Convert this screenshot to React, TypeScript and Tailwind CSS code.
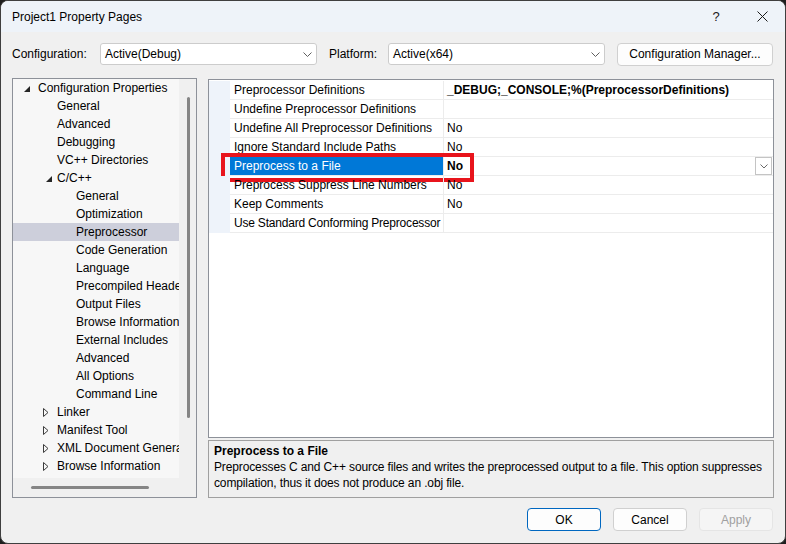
import React from 'react';

type TreeItem = { t: string; l: 0 | 1 | 2; icon?: 'open' | 'closed'; sel?: boolean };

const tree: TreeItem[] = [
  { t: 'Configuration Properties', l: 0, icon: 'open' },
  { t: 'General', l: 1 },
  { t: 'Advanced', l: 1 },
  { t: 'Debugging', l: 1 },
  { t: 'VC++ Directories', l: 1 },
  { t: 'C/C++', l: 1, icon: 'open' },
  { t: 'General', l: 2 },
  { t: 'Optimization', l: 2 },
  { t: 'Preprocessor', l: 2, sel: true },
  { t: 'Code Generation', l: 2 },
  { t: 'Language', l: 2 },
  { t: 'Precompiled Headers', l: 2 },
  { t: 'Output Files', l: 2 },
  { t: 'Browse Information', l: 2 },
  { t: 'External Includes', l: 2 },
  { t: 'Advanced', l: 2 },
  { t: 'All Options', l: 2 },
  { t: 'Command Line', l: 2 },
  { t: 'Linker', l: 1, icon: 'closed' },
  { t: 'Manifest Tool', l: 1, icon: 'closed' },
  { t: 'XML Document Generator', l: 1, icon: 'closed' },
  { t: 'Browse Information', l: 1, icon: 'closed' },
];

const levelPad = ['pl-[6px]', 'pl-[25px]', 'pl-[44px]'];

const rows: { n: string; v: string; bold?: boolean; sel?: boolean; tight?: boolean }[] = [
  { n: 'Preprocessor Definitions', v: '_DEBUG;_CONSOLE;%(PreprocessorDefinitions)', bold: true },
  { n: 'Undefine Preprocessor Definitions', v: '' },
  { n: 'Undefine All Preprocessor Definitions', v: 'No' },
  { n: 'Ignore Standard Include Paths', v: 'No' },
  { n: 'Preprocess to a File', v: 'No', bold: true, sel: true },
  { n: 'Preprocess Suppress Line Numbers', v: 'No' },
  { n: 'Keep Comments', v: 'No' },
  { n: 'Use Standard Conforming Preprocessor', v: '', tight: true },
];

function Chevron() {
  return (
    <svg width="9" height="5" viewBox="0 0 9 5" className="shrink-0">
      <path d="M0.5 0.5 L4.5 4.5 L8.5 0.5" fill="none" stroke="#5f5f5f" strokeWidth="1" />
    </svg>
  );
}

function Combo({ text }: { text: string }) {
  return (
    <div className="w-[217px] h-[22px] bg-white border border-[#cccccc] rounded-[3px] flex items-center pl-[4px] pr-[4px]">
      <span className="flex-1 leading-[16px]">{text}</span>
      <Chevron />
    </div>
  );
}

function TreeRow({ item }: { item: TreeItem }) {
  return (
    <div className={`h-[18px] flex items-center whitespace-nowrap ${levelPad[item.l]} ${item.sel ? 'bg-[#cdcfdb]' : ''}`}>
      <div className="w-[19px] h-[18px] shrink-0 flex items-center">
        {item.icon === 'open' && (
          <svg
            width="6"
            height="6"
            viewBox="0 0 6 6"
            className={`translate-y-[1px] ${item.l === 0 ? 'ml-[5px]' : 'ml-[8px]'}`}
          >
            <polygon points="6,0 6,6 0,6" fill="#262626" />
          </svg>
        )}
        {item.icon === 'closed' && (
          <svg width="6" height="9" viewBox="0 0 6 9" className="ml-[5px]">
            <polygon points="0.5,0.5 5,4.5 0.5,8.5" fill="none" stroke="#3c3c3c" strokeWidth="1" />
          </svg>
        )}
      </div>
      <span className="leading-[16px]">{item.t}</span>
    </div>
  );
}

export default function App() {
  return (
    <div className="w-[786px] h-[544px] bg-[#1e1e1e]">
      <div className="w-full h-full rounded-[8px] border border-[#3f3f3f] bg-[#f0f0f0] overflow-hidden flex flex-col font-['Liberation_Sans',Arial,sans-serif] text-[12px] text-black">
        {/* Title bar */}
        <div className="h-[31px] shrink-0 bg-[#eef3f9] flex items-center pl-[11px]">
          <span className="leading-[16px]">Project1 Property Pages</span>
          <div className="ml-auto flex h-full">
            <div className="w-[46px] h-full flex items-center justify-center text-[13px] text-[#1a1a1a]">?</div>
            <div className="w-[46px] h-full flex items-center justify-center">
              <svg width="11" height="11" viewBox="0 0 11 11">
                <path d="M0.5 0.5 L10.5 10.5 M10.5 0.5 L0.5 10.5" stroke="#1a1a1a" strokeWidth="1" />
              </svg>
            </div>
          </div>
        </div>

        {/* Toolbar */}
        <div className="mt-[10px] h-[24px] shrink-0 flex items-center pl-[11px]">
          <div className="w-[88px] leading-[16px]">Configuration:</div>
          <Combo text="Active(Debug)" />
          <div className="ml-[12px] w-[59px] leading-[16px]">Platform:</div>
          <Combo text="Active(x64)" />
          <button className="ml-[12px] w-[156px] h-[23px] bg-[#fdfdfd] border border-[#d0d0d0] rounded-[4px] flex items-center justify-center leading-[16px]">
            Configuration Manager...
          </button>
        </div>

        {/* Main */}
        <div className="mt-[12px] h-[420px] shrink-0 flex pl-[11px]">
          {/* Tree */}
          <div className="w-[185px] h-full border border-[#8d9199] flex flex-col bg-[#f0f0f0]">
            <div className="flex flex-1 min-h-0">
              <div className="w-[166px] h-[399px] bg-[#f7f7f7] overflow-hidden">
                {tree.map((it, i) => (
                  <TreeRow key={i} item={it} />
                ))}
              </div>
              <div className="flex-1 flex justify-center pt-[18px]">
                <div className="w-[3px] h-[321px] bg-[#858585] rounded-full ml-[1px]" />
              </div>
            </div>
            <div className="h-[19px] shrink-0 flex items-center pl-[18px]">
              <div className="w-[118px] h-[3px] bg-[#858585] rounded-full" />
            </div>
          </div>

          {/* Right column */}
          <div className="ml-[11px] w-[566px] h-full flex flex-col pt-[1px]">
            <div className="h-[359px] shrink-0 border border-[#8d9199] bg-white pt-[1px]">
              {rows.map((r, i) => (
                <div key={i} className="relative h-[19px] flex">
                  <div className="w-[21px] shrink-0 bg-[#eef3fa]" />
                  <div
                    className={`w-[214px] shrink-0 border-b border-r border-[#ececec] pl-[4px] flex items-center whitespace-nowrap overflow-hidden ${
                      r.sel ? 'bg-[#0078d7] text-white' : ''
                    } ${r.tight ? 'tracking-[-0.2px]' : ''}`}
                  >
                    <span className="leading-[16px]">{r.n}</span>
                  </div>
                  <div className="flex-1 border-b border-[#ececec] pl-[3px] flex items-center">
                    <span className={`leading-[16px] ${r.bold ? 'font-bold' : ''}`}>{r.v}</span>
                    {r.sel && (
                      <div className="ml-auto mr-[1px] w-[17px] h-[18px] border border-[#c4c4c4] bg-white flex items-center justify-center">
                        <svg width="8" height="5" viewBox="0 0 8 5">
                          <path d="M0.5 0.5 L4 4 L7.5 0.5" fill="none" stroke="#6a6a6a" strokeWidth="1" />
                        </svg>
                      </div>
                    )}
                  </div>
                  {r.sel && (
                    <div className="absolute left-[12px] top-[-4px] w-[253px] h-[29px] border-[4px] border-[#e8141c] pointer-events-none" />
                  )}
                </div>
              ))}
            </div>
            <div className="mt-[2px] flex-1 border border-[#a0a0a0] bg-[#f0f0f0] pt-[2px] pl-[5px] leading-[16px]">
              <div className="font-bold">Preprocess to a File</div>
              <div className="whitespace-nowrap tracking-[-0.13px]">
                Preprocesses C and C++ source files and writes the preprocessed output to a file. This option suppresses
                <br />
                compilation, thus it does not produce an .obj file.
              </div>
            </div>
          </div>
        </div>

        {/* Footer */}
        <div className="mt-[10px] flex justify-end gap-[12px] pr-[12px]">
          <button className="w-[74px] h-[23px] bg-[#fdfdfd] border border-[#0067c0] rounded-[4px] flex items-center justify-center leading-[16px]">
            OK
          </button>
          <button className="w-[74px] h-[23px] bg-[#fdfdfd] border border-[#d0d0d0] rounded-[4px] flex items-center justify-center leading-[16px]">
            Cancel
          </button>
          <button className="w-[74px] h-[23px] bg-[#f5f5f5] border border-[#e5e5e5] rounded-[4px] flex items-center justify-center leading-[16px] text-[#a0a0a0]">
            Apply
          </button>
        </div>
      </div>
    </div>
  );
}
